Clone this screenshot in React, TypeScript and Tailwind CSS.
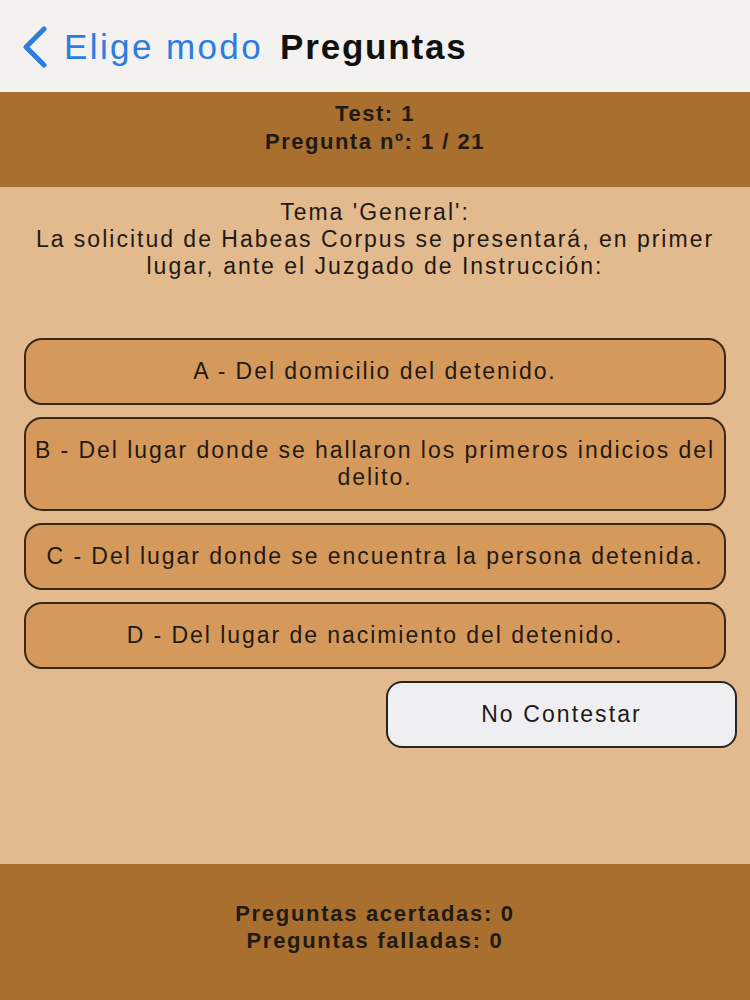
import React from "react";

const options = [
  "A - Del domicilio del detenido.",
  "B - Del lugar donde se hallaron los primeros indicios del delito.",
  "C - Del lugar donde se encuentra la persona detenida.",
  "D - Del lugar de nacimiento del detenido.",
];

export default function App() {
  return (
    <div className="w-[750px] h-[1000px] flex flex-col bg-[#e3b98e] text-[#1f1a14] font-[Liberation_Sans,Arial,sans-serif] overflow-hidden">
      <div className="h-[92px] shrink-0 bg-[#f3f2f1] flex items-center pl-[20px] pt-[2px]">
        <svg width="28" height="42" viewBox="0 0 28 42" className="mr-[16px]">
          <path d="M24 3 L6 21 L24 39" fill="none" stroke="#2a7de1" strokeWidth="5" strokeLinecap="round" strokeLinejoin="round" />
        </svg>
        <span className="text-[35px] text-[#2a7de1] tracking-[2.4px]">Elige modo</span>
        <span className="text-[35px] font-bold text-[#111] ml-[17px] tracking-[1.8px]">Preguntas</span>
      </div>
      <div className="h-[95px] shrink-0 bg-[#a86f2f] flex flex-col items-center justify-center text-[22px] font-bold leading-[28px] tracking-[1.5px] pb-[24px]">
        <div>Test: 1</div>
        <div>Pregunta nº: 1 / 21</div>
      </div>
      <div className="flex-1 flex flex-col px-[24px]">
        <div className="pt-[12px] text-center text-[23px] leading-[27px] px-[10px] tracking-[2px]">
          <div>Tema 'General':</div>
          <div>La solicitud de Habeas Corpus se presentará, en primer lugar, ante el Juzgado de Instrucción:</div>
        </div>
        <div className="mt-[58px] flex flex-col gap-[12px]">
          {options.map((o) => (
            <div
              key={o}
              className="min-h-[67px] rounded-[18px] border-2 border-[#3a2816] bg-[#d6995c] flex items-center justify-center text-center text-[23px] leading-[27px] tracking-[1.95px] px-[3px] py-[18px]"
            >
              {o}
            </div>
          ))}
        </div>
        <div className="flex justify-end mt-[12px] -mr-[11px]">
          <div className="w-[351px] h-[67px] rounded-[16px] border-2 border-[#2a2420] bg-[#efeff1] flex items-center justify-center text-[23px] tracking-[2.1px]">
            No Contestar
          </div>
        </div>
      </div>
      <div className="h-[136px] shrink-0 bg-[#a86f2f] flex flex-col items-center justify-center text-[22px] font-bold leading-[27px] tracking-[1.7px] pb-[10px]">
        <div>Preguntas acertadas: 0</div>
        <div>Preguntas falladas: 0</div>
      </div>
    </div>
  );
}
